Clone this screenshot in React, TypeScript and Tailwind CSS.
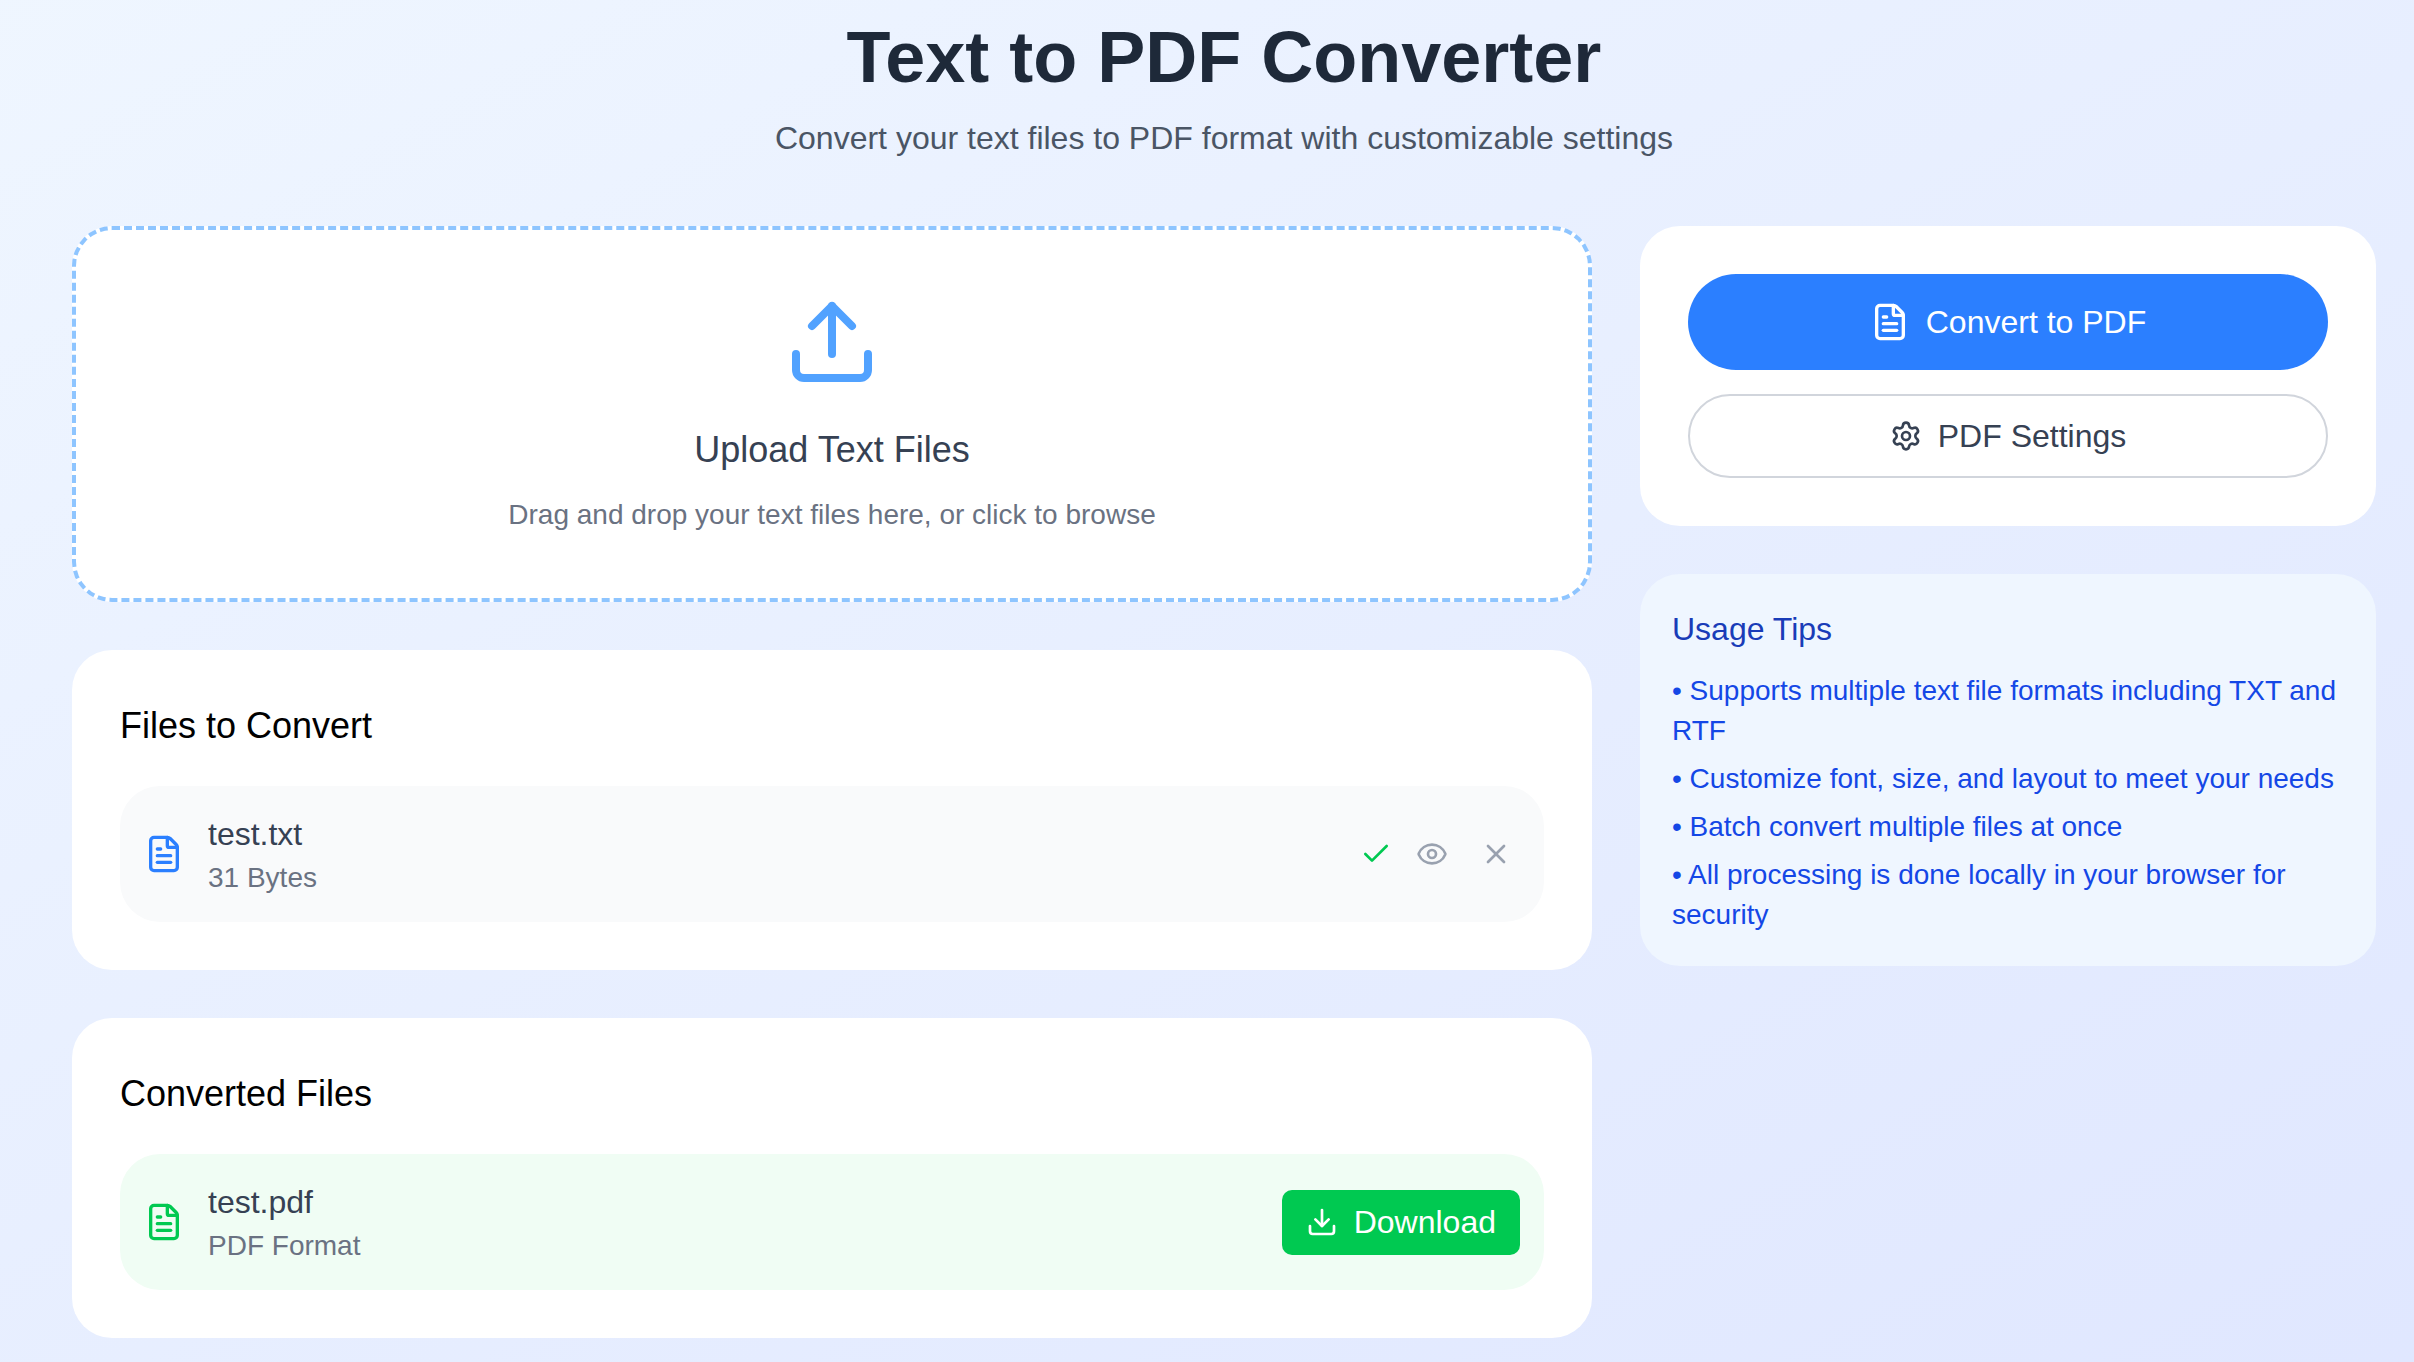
import React from 'react';
import { Check, Download, Eye, FileText, Settings, Upload, X } from 'lucide-react';

const tips = [
  'Supports multiple text file formats including TXT and RTF',
  'Customize font, size, and layout to meet your needs',
  'Batch convert multiple files at once',
  'All processing is done locally in your browser for security',
];

const App: React.FC = () => {
  return (
    <div className="min-h-screen bg-gradient-to-br from-blue-50 to-indigo-100 pt-[17px] pb-6 pl-[72px] font-['Liberation_Sans',Arial,sans-serif]">
      <div className="w-[2304px]">
        {/* Header */}
        <div className="mb-[63px] text-center">
          <h1 className="mb-4 text-[72px] leading-[80px] font-bold text-gray-800">Text to PDF Converter</h1>
          <p className="text-[32px] leading-[50px] text-gray-600">
            Convert your text files to PDF format with customizable settings
          </p>
        </div>

        <div className="flex gap-12">
          {/* Left column */}
          <div className="flex w-[1520px] flex-col gap-12">
            <div className="flex flex-col items-center rounded-[40px] border-4 border-dashed border-blue-300 bg-white pt-16 pb-[63px]">
              <Upload className="h-24 w-24 text-blue-400" />
              <h2 className="mt-9 text-[36px] leading-[48px] text-gray-700">Upload Text Files</h2>
              <p className="mt-[21px] text-[28px] leading-[40px] text-gray-500">
                Drag and drop your text files here, or click to browse
              </p>
            </div>

            <div className="rounded-[40px] bg-white p-12">
              <h3 className="mb-[33px] text-[36px] leading-[55px] text-black">Files to Convert</h3>
              <div className="flex h-[136px] items-center justify-between rounded-[40px] bg-gray-50 px-6">
                <div className="flex items-center gap-6">
                  <FileText className="h-10 w-10 text-blue-500" />
                  <div className="pt-[2px]">
                    <p className="text-[32px] leading-[44px] text-gray-700">test.txt</p>
                    <p className="text-[28px] leading-[43px] text-gray-500">31 Bytes</p>
                  </div>
                </div>
                <div className="flex items-center gap-4">
                  <Check className="h-8 w-8 text-green-500" />
                  <button className="p-2 text-gray-400">
                    <Eye className="h-8 w-8" />
                  </button>
                  <button className="p-2 text-gray-400">
                    <X className="h-8 w-8" />
                  </button>
                </div>
              </div>
            </div>

            <div className="rounded-[40px] bg-white p-12">
              <h3 className="mb-[33px] text-[36px] leading-[55px] text-black">Converted Files</h3>
              <div className="flex h-[136px] items-center justify-between rounded-[40px] bg-green-50 px-6">
                <div className="flex items-center gap-6">
                  <FileText className="h-10 w-10 text-green-500" />
                  <div className="pt-[2px]">
                    <p className="text-[32px] leading-[44px] text-gray-700">test.pdf</p>
                    <p className="text-[28px] leading-[43px] text-gray-500">PDF Format</p>
                  </div>
                </div>
                <button className="flex h-[65px] items-center gap-4 rounded-[10px] bg-green-500 px-6 text-[32px] text-white">
                  <Download className="h-8 w-8" />
                  Download
                </button>
              </div>
            </div>
          </div>

          {/* Right column */}
          <div className="flex w-[736px] flex-col gap-12 self-start">
            <div className="flex flex-col gap-6 rounded-[40px] bg-white p-12">
              <button className="flex h-24 items-center justify-center gap-4 rounded-full bg-blue-500 text-[32px] text-white">
                <FileText className="h-10 w-10" />
                Convert to PDF
              </button>
              <button className="flex h-[84px] items-center justify-center gap-4 rounded-full border-2 border-gray-300 text-[32px] text-gray-700">
                <Settings className="h-8 w-8" />
                PDF Settings
              </button>
            </div>

            <div className="rounded-[40px] bg-blue-50 px-8 pt-8 pb-[31px]">
              <h3 className="mb-[19px] text-[32px] leading-[46px] text-blue-800">Usage Tips</h3>
              <ul className="flex flex-col gap-2 text-[28px] leading-[40px] text-blue-700">
                {tips.map((tip) => (
                  <li key={tip}>• {tip}</li>
                ))}
              </ul>
            </div>
          </div>
        </div>
      </div>
    </div>
  );
};

export default App;
